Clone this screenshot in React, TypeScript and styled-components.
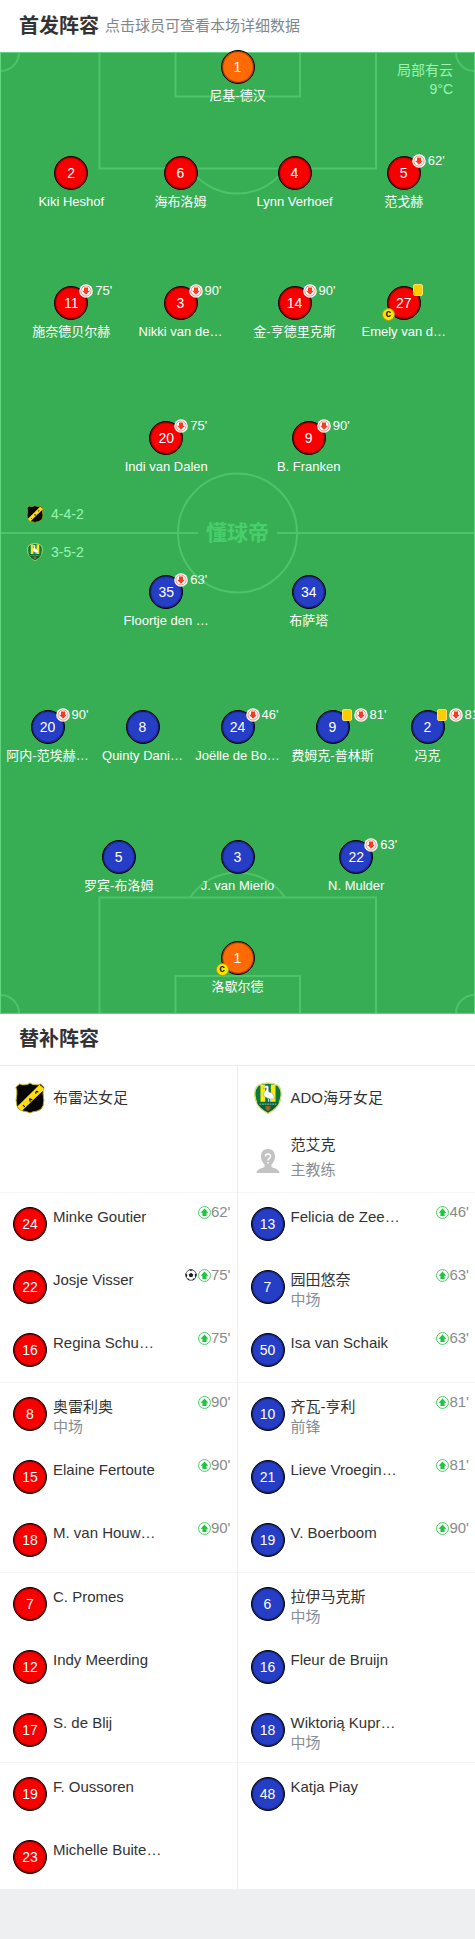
import React from "react";
import styled, { createGlobalStyle } from "styled-components";

const GlobalStyle = createGlobalStyle`
  * { box-sizing: border-box; }
  body {
    margin: 0;
    background: #eeeff1;
    color: #333333;
    font-family: "Liberation Sans", "Noto Sans CJK SC", sans-serif;
    font-size: 15px;
  }
  h2, h3, p, ul { margin: 0; padding: 0; font-weight: 400; }
  ul { list-style: none; }
  button { font: inherit; color: inherit; border: 0; padding: 0; background: none; cursor: pointer; }
`;

type Side = "home" | "away" | "keeper";
const KIT: Record<Side, string> = { home: "#f80000", away: "#263dc6", keeper: "#ff6a05" };

const PITCH_W = 475;
const PITCH_H = 962;

const Page = styled.main`
  background: #ffffff;
`;

const SectionHead = styled.header<{ $ruled?: boolean }>`
  display: flex;
  align-items: center;
  gap: 6px;
  height: 52px;
  padding: 0 19px 1px;
  border-bottom: ${(p) => (p.$ruled ? "1px solid #ececec" : "0")};
`;

const SectionTitle = styled.h2`
  font-size: 20px;
  font-weight: 700;
  line-height: 28px;
`;

const SectionHint = styled.p`
  font-size: 15px;
  line-height: 22px;
  color: #81878d;
`;

const PitchArea = styled.section`
  position: relative;
  aspect-ratio: ${PITCH_W} / ${PITCH_H};
  background: #37ae54;
  color: #ffffff;
  overflow-x: clip;
`;

const Markings = styled.svg`
  display: block;
  width: 100%;
  height: 100%;
`;

const Watermark = styled.span`
  position: absolute;
  top: 50%;
  left: 50%;
  transform: translate(-50%, -50%);
  font-size: 21px;
  font-weight: 700;
  line-height: 24px;
  color: #48cf6b;
`;

const Weather = styled.p`
  position: absolute;
  top: 9px;
  right: 22px;
  display: flex;
  flex-direction: column;
  text-align: right;
  font-size: 14px;
  line-height: 19px;
  color: #9af5b1;
`;

const Formations = styled.ul`
  position: absolute;
  top: 50%;
  left: 26px;
  transform: translateY(-50%);
  display: flex;
  flex-direction: column;
  gap: 18px;
  font-size: 14px;
  line-height: 20px;
  color: #9af5b1;
`;

const Formation = styled.li`
  display: flex;
  align-items: center;
  gap: 7px;
`;

const Spot = styled.button<{ $x: number; $y: number }>`
  position: absolute;
  left: ${(p) => p.$x}%;
  top: ${(p) => (p.$y / PITCH_H) * 100}%;
  display: flex;
  flex-direction: column;
  align-items: center;
  gap: 3px;
  width: 90px;
  margin: -17px 0 0 -45px;
`;

const Disc = styled.span<{ $side: Side }>`
  position: relative;
  display: flex;
  flex: none;
  align-items: center;
  justify-content: center;
  width: 34px;
  height: 34px;
  border: 1px solid #000000;
  border-radius: 50%;
  background: ${(p) => KIT[p.$side]};
  box-shadow: inset 0 0 1px 1px rgba(0, 0, 0, 0.5);
  color: #ffffff;
  font-size: 14px;
  line-height: 20px;
`;

const SpotName = styled.span`
  font-size: 13px;
  line-height: 18px;
  white-space: nowrap;
`;

const SpotEvents = styled.span`
  position: absolute;
  top: -3px;
  left: 24px;
  display: flex;
  align-items: center;
  gap: 2px;
  font-size: 13px;
  line-height: 14px;
`;

const Card = styled.span`
  width: 10px;
  height: 12px;
  margin-left: 1px;
  border: 1px solid #ffdf6b;
  border-radius: 2px;
  background: #ffcc00;
`;

const Captain = styled.span`
  position: absolute;
  left: -6px;
  bottom: -2px;
  width: 13px;
  height: 13px;
  border: 1px solid #a99a12;
  border-radius: 50%;
  background: #ffe300;
  color: #222222;
  font-size: 10px;
  font-weight: 700;
  line-height: 10px;
  text-align: center;
`;

const Bench = styled.section`
  display: grid;
  grid-template-columns: 1fr 1fr;
`;

const BenchSide = styled.div`
  min-width: 0;
  &:first-child { border-right: 1px solid #ececec; }
`;

const TeamHead = styled.div`
  height: 126px;
`;

const TeamRow = styled.div`
  display: grid;
  grid-template-columns: 34px 1fr;
  column-gap: 6px;
  align-items: center;
  justify-items: center;
  height: 63px;
  padding: 0 13px;
`;

const TeamName = styled.h3`
  justify-self: start;
  font-size: 15px;
  line-height: 25px;
`;

const Coach = styled.div`
  justify-self: start;
  padding-bottom: 7px;
  line-height: 25px;
`;

const Role = styled.p`
  color: #868d94;
`;

const BenchGroup = styled.ul`
  border-top: 1px solid #f5f5f5;
`;

const BenchRow = styled.li`
  display: grid;
  grid-template-columns: 34px 1fr auto;
  column-gap: 6px;
  height: 63px;
  padding: 14px 6px 0 13px;
  line-height: 20px;
`;

const BenchText = styled.div`
  min-width: 0;
  white-space: nowrap;
`;

const BenchEvents = styled.div`
  display: flex;
  align-items: center;
  height: 20px;
  margin-top: -5px;
  color: #8a8a8a;
`;

function NacCrest({ size }: { size: number }) {
  return (
    <svg width={size} height={size} viewBox="0 0 32 34" aria-hidden="true">
      <path
        d="M5 2 Q8 3.5 10.500 3 Q14 3 16 1 Q18 3 22 3 Q25 3.500 27 2 L31 5.500 Q29.500 9 30 13 Q31.500 20 30 25 Q28.500 30 23 31 Q18 31.500 16 33 Q14 31.500 9 31 Q3.500 30 2 25 Q.5 20 2 13 Q2.500 9 1 5.500 Z"
        fill="#050505"
        stroke="#c6b01d"
        strokeWidth="1"
      />
      <path d="M3 25.500 L26 3 L30.500 6.500 L30 9 L7.500 30.500 L4 28.500 Z" fill="#ffdc18" />
      <path d="M8.500 24.500 l2 2 M15.500 17.500 l.8 3.500 M15.500 18 l3 1 M22.500 12.500 q-1-2 .8-2.500 q1 0 1.200 1" fill="none" stroke="#1b1800" strokeWidth="1.300" />
    </svg>
  );
}

function AdoCrest({ size }: { size: number }) {
  return (
    <svg width={size} height={size} viewBox="0 0 32 34" aria-hidden="true">
      <path d="M16 1 Q22 1 27 4 Q30.500 8 30 14 Q29.500 26 16 33.500 Q2.500 26 2 14 Q1.500 8 5 4 Q10 1 16 1Z" fill="#087a3e" stroke="#d9df76" strokeWidth="1.500" />
      <path d="M8 3 H13 V21 H8 Z M19 3 H24 V21 H19 Z" fill="#ffe712" />
      <path d="M4 21.500 H28 Q25 28 16 32.500 Q7 28 4 21.500Z" fill="#0a6335" />
      <path d="M12.500 4.500 Q16.500 2.500 16.800 6 Q16 9 17 10.500 Q23 12 22.500 18 Q17 19 13 16 Q9.500 13 13.500 9 Q15 7 14 6 L10.500 7.500 Z" fill="#ffffff" stroke="#617d70" strokeWidth=".4" />
      <path d="M16.500 18 V21 M18.500 18 V21" stroke="#ffffff" strokeWidth=".8" />
      <path d="M7 23.500 H25" stroke="#a8c9b3" strokeWidth="1" strokeDasharray="2 .7" />
      <path d="M13.500 25.500 H18.500 V29 L16 31 L13.500 29Z" fill="#9a6226" />
    </svg>
  );
}

function UnknownAvatar() {
  return (
    <svg width="24" height="24" viewBox="0 0 24 24" aria-hidden="true">
      <path d="M12 0 C17 0 19 3.500 19 7.500 C19 11 17.500 13.500 15.500 15.500 V18 C18 19.500 23 19.500 23.500 24 H.5 C1 19.500 6 19.500 8.500 18 V15.500 C6.500 13.500 5 11 5 7.500 C5 3.500 7 0 12 0Z" fill="#c3c3c3" />
      <path d="M9.500 7.500 Q9.500 5 12 5 Q14.500 5 14.500 7.300 Q14.500 8.800 12.800 9.800 Q12 10.300 12 11.500 M12 13 V14.500" fill="none" stroke="#ffffff" strokeWidth="1.500" />
    </svg>
  );
}

function SubOff() {
  return (
    <svg width="14" height="14" viewBox="0 0 14 14" role="img" aria-label="换下">
      <circle cx="7" cy="7" r="6.800" fill="#ffffff" />
      <circle cx="7" cy="7" r="5.100" fill="none" stroke="#f6614c" strokeWidth=".7" />
      <path d="M5 3.600 H9 V6.800 H10.900 L7 10.700 L3.100 6.800 H5Z" fill="#f83a22" />
    </svg>
  );
}

function SubOn() {
  return (
    <svg width="13" height="13" viewBox="0 0 12 12" role="img" aria-label="换上">
      <circle cx="6" cy="6" r="5.500" fill="#ffffff" stroke="#2fc750" strokeWidth=".8" />
      <path d="M4.100 9.300 H7.900 V6.200 H9.600 L6 2.400 L2.400 6.200 H4.100Z" fill="#1fc53f" />
    </svg>
  );
}

function Ball() {
  return (
    <svg width="13" height="12" viewBox="0 0 13 12" role="img" aria-label="进球">
      <circle cx="6" cy="6" r="5.300" fill="#ffffff" stroke="#222222" strokeWidth=".7" />
      <path d="M6 3.800 L8.200 5.400 L7.400 7.900 H4.600 L3.800 5.400Z M3.800 .8 L6 2.100 L8.200 .8 Q6 0 3.800 .8Z M.6 4.400 L2.300 5.600 L1.800 8.600 Q.1 6.800 .6 4.400Z M11.400 4.400 L9.700 5.600 L10.200 8.600 Q11.900 6.800 11.400 4.400Z M3.300 9.200 L4.900 11.400 Q3.300 11.200 2.200 9.900Z M8.700 9.200 L7.100 11.400 Q8.700 11.200 9.800 9.900Z" fill="#1c1c1c" />
    </svg>
  );
}

interface Starter {
  no: number;
  name: string;
  off?: string;
  card?: boolean;
  captain?: boolean;
}
interface Line {
  y: number;
  side: Side;
  xs: number[];
  players: Starter[];
}

const LINES: Line[] = [
  { y: 15, side: "keeper", xs: [50], players: [{ no: 1, name: "尼基-德汉" }] },
  {
    y: 121,
    side: "home",
    xs: [15, 38, 62, 85],
    players: [
      { no: 2, name: "Kiki Heshof" },
      { no: 6, name: "海布洛姆" },
      { no: 4, name: "Lynn Verhoef" },
      { no: 5, name: "范戈赫", off: "62'" },
    ],
  },
  {
    y: 251,
    side: "home",
    xs: [15, 38, 62, 85],
    players: [
      { no: 11, name: "施奈德贝尔赫", off: "75'" },
      { no: 3, name: "Nikki van de…", off: "90'" },
      { no: 14, name: "金-亨德里克斯", off: "90'" },
      { no: 27, name: "Emely van d…", card: true, captain: true },
    ],
  },
  {
    y: 386,
    side: "home",
    xs: [35, 65],
    players: [
      { no: 20, name: "Indi van Dalen", off: "75'" },
      { no: 9, name: "B. Franken", off: "90'" },
    ],
  },
  {
    y: 540,
    side: "away",
    xs: [35, 65],
    players: [
      { no: 35, name: "Floortje den …", off: "63'" },
      { no: 34, name: "布萨塔" },
    ],
  },
  {
    y: 675,
    side: "away",
    xs: [10, 30, 50, 70, 90],
    players: [
      { no: 20, name: "阿内-范埃赫…", off: "90'" },
      { no: 8, name: "Quinty Dani…" },
      { no: 24, name: "Joëlle de Bo…", off: "46'" },
      { no: 9, name: "费姆克-普林斯", off: "81'", card: true },
      { no: 2, name: "冯克", off: "81'", card: true },
    ],
  },
  {
    y: 805,
    side: "away",
    xs: [25, 50, 75],
    players: [
      { no: 5, name: "罗宾-布洛姆" },
      { no: 3, name: "J. van Mierlo" },
      { no: 22, name: "N. Mulder", off: "63'" },
    ],
  },
  { y: 906, side: "keeper", xs: [50], players: [{ no: 1, name: "洛歇尔德", captain: true }] },
];

interface Sub {
  no: number;
  name: string;
  role?: string;
  on?: string;
  goal?: boolean;
}

const HOME_BENCH: Sub[] = [
  { no: 24, name: "Minke Goutier", on: "62'" },
  { no: 22, name: "Josje Visser", on: "75'", goal: true },
  { no: 16, name: "Regina Schu…", on: "75'" },
  { no: 8, name: "奥雷利奥", role: "中场", on: "90'" },
  { no: 15, name: "Elaine Fertoute", on: "90'" },
  { no: 18, name: "M. van Houw…", on: "90'" },
  { no: 7, name: "C. Promes" },
  { no: 12, name: "Indy Meerding" },
  { no: 17, name: "S. de Blij" },
  { no: 19, name: "F. Oussoren" },
  { no: 23, name: "Michelle Buite…" },
];

const AWAY_BENCH: Sub[] = [
  { no: 13, name: "Felicia de Zee…", on: "46'" },
  { no: 7, name: "园田悠奈", role: "中场", on: "63'" },
  { no: 50, name: "Isa van Schaik", on: "63'" },
  { no: 10, name: "齐瓦-亨利", role: "前锋", on: "81'" },
  { no: 21, name: "Lieve Vroegin…", on: "81'" },
  { no: 19, name: "V. Boerboom", on: "90'" },
  { no: 6, name: "拉伊马克斯", role: "中场" },
  { no: 16, name: "Fleur de Bruijn" },
  { no: 18, name: "Wiktorią Kupr…", role: "中场" },
  { no: 48, name: "Katja Piay" },
];

const inThrees = (subs: Sub[]) =>
  Array.from({ length: Math.ceil(subs.length / 3) }, (_, i) => subs.slice(i * 3, i * 3 + 3));

function Substitutes({ subs, side }: { subs: Sub[]; side: Side }) {
  return (
    <>
      {inThrees(subs).map((group) => (
        <BenchGroup key={group[0].no}>
          {group.map((s) => (
            <BenchRow key={s.no}>
              <Disc $side={side}>{s.no}</Disc>
              <BenchText>
                <p>{s.name}</p>
                {s.role && <Role>{s.role}</Role>}
              </BenchText>
              {s.on && (
                <BenchEvents>
                  {s.goal && <Ball />}
                  <SubOn />
                  <span>{s.on}</span>
                </BenchEvents>
              )}
            </BenchRow>
          ))}
        </BenchGroup>
      ))}
    </>
  );
}

function Pitch() {
  return (
    <PitchArea>
      <Markings viewBox={`0 0 ${PITCH_W} ${PITCH_H}`} fill="none" stroke="#4dc46a" strokeWidth="2" aria-hidden="true">
        <path d="M99.500 0 V116.500 H376 V0 M175.500 0 V44.500 H300 V0" />
        <path d="M190 116.500 A57.500 57.500 0 0 0 285 116.500" />
        <path d="M99.500 962 V845.500 H376 V962 M175.500 962 V924 H300 V962" />
        <path d="M190 845.500 A57.500 57.500 0 0 1 285 845.500" />
        <circle cx="237.500" cy="481" r="59.500" />
        <path d="M0 481 H198 M277 481 H475" />
        <path d="M19 0 A18.500 18.500 0 0 1 0 19 M456 0 A18.500 18.500 0 0 0 475 19 M0 943 A18.500 18.500 0 0 1 19 962 M475 943 A18.500 18.500 0 0 0 456 962" />
        <rect x=".5" y=".5" width="474" height="961" stroke="#5fd67f" strokeWidth="1" />
      </Markings>
      <Watermark>懂球帝</Watermark>
      <Weather>
        <span>局部有云</span>
        <span>9°C</span>
      </Weather>
      <Formations>
        <Formation>
          <NacCrest size={18} />
          4-4-2
        </Formation>
        <Formation>
          <AdoCrest size={18} />
          3-5-2
        </Formation>
      </Formations>
      {LINES.map((line) =>
        line.players.map((p, i) => (
          <Spot key={`${line.y}-${p.no}`} type="button" $x={line.xs[i]} $y={line.y}>
            <Disc $side={line.side}>
              {p.no}
              {p.captain && <Captain>c</Captain>}
              <SpotEvents>
                {p.card && <Card />}
                {p.off && (
                  <>
                    <SubOff />
                    <span>{p.off}</span>
                  </>
                )}
              </SpotEvents>
            </Disc>
            <SpotName>{p.name}</SpotName>
          </Spot>
        ))
      )}
    </PitchArea>
  );
}

export default function App() {
  return (
    <>
      <GlobalStyle />
      <Page>
        <SectionHead>
          <SectionTitle>首发阵容</SectionTitle>
          <SectionHint>点击球员可查看本场详细数据</SectionHint>
        </SectionHead>
        <Pitch />
        <SectionHead $ruled>
          <SectionTitle>替补阵容</SectionTitle>
        </SectionHead>
        <Bench>
          <BenchSide>
            <TeamHead>
              <TeamRow>
                <NacCrest size={32} />
                <TeamName>布雷达女足</TeamName>
              </TeamRow>
            </TeamHead>
            <Substitutes subs={HOME_BENCH} side="home" />
          </BenchSide>
          <BenchSide>
            <TeamHead>
              <TeamRow>
                <AdoCrest size={32} />
                <TeamName>ADO海牙女足</TeamName>
              </TeamRow>
              <TeamRow>
                <UnknownAvatar />
                <Coach>
                  <p>范艾克</p>
                  <Role>主教练</Role>
                </Coach>
              </TeamRow>
            </TeamHead>
            <Substitutes subs={AWAY_BENCH} side="away" />
          </BenchSide>
        </Bench>
      </Page>
    </>
  );
}
